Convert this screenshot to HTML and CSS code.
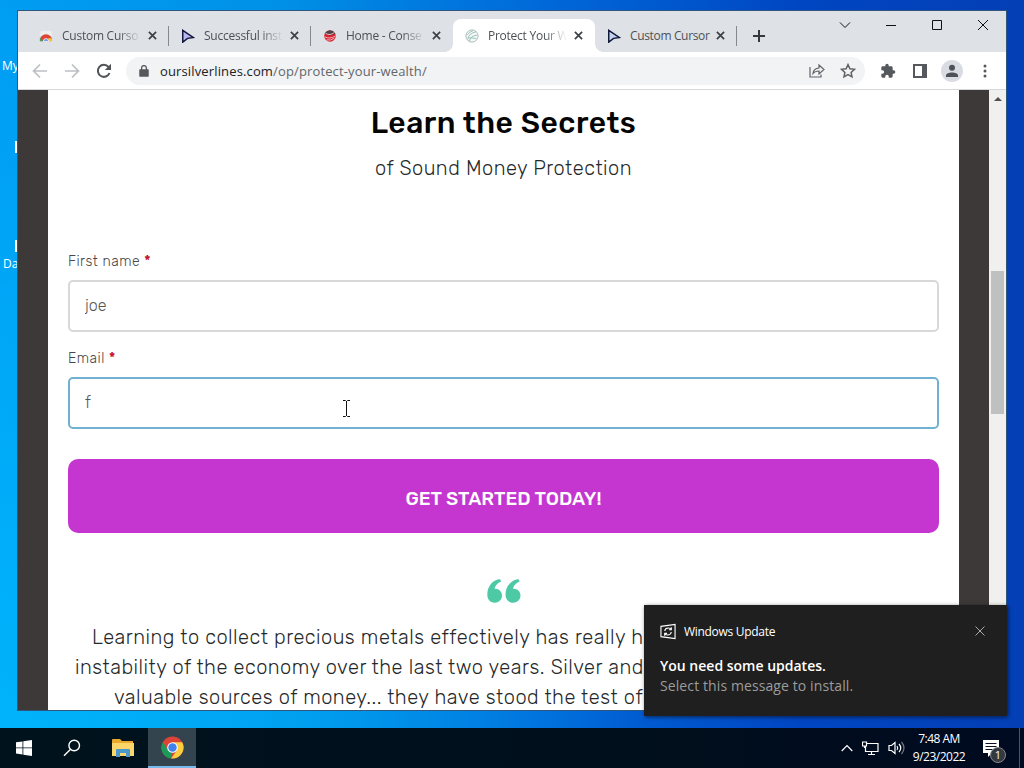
FILE: index.html
```html
<!DOCTYPE html>
<html lang="en">
<head>
    <meta charset="utf-8">
    <title>Protect Your Wealth</title>
    <link rel="stylesheet" href="styles.css">
</head>
<body>
<div class="desktop">
    <div class="shortcut label-my">My</div>
    <div class="shortcut icon-edge edge-one"></div>
    <div class="shortcut icon-edge edge-two"></div>
    <div class="shortcut label-da">Da</div>

    <div class="window">
        <div class="tabstrip">
            <div class="tab">
                <svg class="favicon" viewBox="0 0 16 16"><path d="M2 2h12l1 6H1z" fill="#eee"/><path d="M1 13a7 7 0 0 1 14 0l-4 1H5z" fill="#dc4437"/><path d="M1 10l4 4H1z" fill="#3f9f58"/><path d="M11 10l4 1v3h-5z" fill="#f6c22d"/><path d="M5 14a3 3 0 0 1 6 0z" fill="#4c84e8" stroke="#fff"/></svg>
                <span class="tab-title">Custom Curso</span>
                <svg class="tab-close" viewBox="0 0 10 10"><path d="M1 1l8 8M9 1L1 9"/></svg>
            </div>
            <div class="tab">
                <svg class="favicon" viewBox="0 0 16 16"><path d="M2 1.500l12 8.200-6.500 1L2 15z" fill="#b9b6f2" stroke="#10173a" stroke-width="1.700"/></svg>
                <span class="tab-title">Successful inst</span>
                <svg class="tab-close" viewBox="0 0 10 10"><path d="M1 1l8 8M9 1L1 9"/></svg>
            </div>
            <div class="tab no-line">
                <svg class="favicon" viewBox="0 0 16 16"><circle cx="8" cy="8" r="6.600" fill="#d8202e"/><path d="M2 5.500a6.600 6.600 0 0 1 12 0L9 7z" fill="#4a4547"/><path d="M3 5q5 3 10-1M2 9q6 3 12-1M4 12.500q5 1 9-2" fill="none" stroke="#f5cfd0"/></svg>
                <span class="tab-title">Home - Conse</span>
                <svg class="tab-close" viewBox="0 0 10 10"><path d="M1 1l8 8M9 1L1 9"/></svg>
            </div>
            <div class="tab active">
                <svg class="favicon" viewBox="0 0 16 16"><circle cx="8" cy="8" r="7" fill="#f4f7f6" stroke="#a5b5b3"/><path d="M3 12Q4 5 13 3M5 14q1-6 9-7M2 7q3-4 7-5M4 10q5 0 9 1" fill="none" stroke="#8bbdb1"/></svg>
                <span class="tab-title">Protect Your W</span>
                <svg class="tab-close" viewBox="0 0 10 10"><path d="M1 1l8 8M9 1L1 9"/></svg>
            </div>
            <div class="tab">
                <svg class="favicon" viewBox="0 0 16 16"><path d="M2 1.500l12 8.200-6.500 1L2 15z" fill="#c5d2ee" stroke="#10173a" stroke-width="1.700"/></svg>
                <span class="tab-title full">Custom Cursor</span>
                <svg class="tab-close" viewBox="0 0 10 10"><path d="M1 1l8 8M9 1L1 9"/></svg>
            </div>
            <svg class="new-tab" viewBox="0 0 12 12"><path d="M6 0v12M0 6h12"/></svg>
            <div class="controls">
                <svg viewBox="0 0 12 12"><path d="M1 3.500l5 5 5-5"/></svg>
                <svg viewBox="0 0 12 12"><path d="M1 6.500h10"/></svg>
                <svg viewBox="0 0 12 12"><path d="M1.500 1.500h9v9h-9z"/></svg>
                <svg viewBox="0 0 12 12"><path d="M1 1l10 10M11 1L1 11"/></svg>
            </div>
        </div>

        <div class="toolbar">
            <svg class="nav" viewBox="0 0 16 16"><path d="M15 8H2M8 1.500L1.500 8 8 14.500"/></svg>
            <svg class="nav" viewBox="0 0 16 16"><path d="M1 8h13M8 1.500L14.500 8 8 14.500"/></svg>
            <svg class="nav reload" viewBox="0 0 16 16"><path d="M13.500 10A6 6 0 1 1 12.500 4"/><path d="M15 .8V7H8.800z" class="solid"/></svg>
            <div class="omnibox">
                <svg class="lock" viewBox="0 0 10 12"><path d="M1 5h8v6H1z" fill="#55585c" stroke="#55585c" stroke-width="1.500" stroke-linejoin="round"/><path d="M2.600 5V3a2.400 2.400 0 0 1 4.800 0v2" fill="none" stroke="#55585c" stroke-width="1.300"/></svg>
                <div class="url">oursilverlines.com<span>/op/protect-your-wealth/</span></div>
                <svg class="share" viewBox="0 0 16 14"><path d="M1 3v10h11V10.500M4 9.500q.5-5 6-5.500V1l5 4.500L10 10V7q-4 0-6 2.500z"/></svg>
                <svg class="star" viewBox="0 0 16 16"><path d="M8 1.600l1.900 4.200 4.600.5-3.400 3.100.9 4.500L8 11.600l-4 2.300.9-4.500L1.500 6.300l4.600-.5z"/></svg>
            </div>
            <svg class="tool puzzle" viewBox="0 0 24 24"><path d="M20.500 11H19V7c0-1.100-.9-2-2-2h-4V3.500a2.500 2.500 0 0 0-5 0V5H4c-1.100 0-2 .9-2 2v3.800h1.500a2.700 2.700 0 0 1 0 5.400H2V20c0 1.100.9 2 2 2h3.800v-1.500a2.700 2.700 0 0 1 5.400 0V22H17c1.100 0 2-.9 2-2v-4h1.500a2.500 2.500 0 0 0 0-5z"/></svg>
            <svg class="tool panel" viewBox="0 0 14 14"><path d="M0 0h14v14H0zM2 2v10h7V2z" fill-rule="evenodd"/></svg>
            <div class="avatar"><svg viewBox="0 0 14 14"><circle cx="7" cy="3.800" r="3"/><path d="M1 13v-1.500C1 9.500 4 8.500 7 8.500s6 1 6 3V13z"/></svg></div>
            <svg class="dots" viewBox="0 0 4 14"><circle cx="2" cy="2" r="1.500"/><circle cx="2" cy="7" r="1.500"/><circle cx="2" cy="12" r="1.500"/></svg>
        </div>

        <div class="viewport">
            <main class="page">
                <h1>Learn the Secrets</h1>
                <p class="subtitle">of Sound Money Protection</p>
                <form>
                    <label for="firstName">First name <b>*</b></label>
                    <input type="text" id="firstName" value="joe">
                    <label for="email">Email <b>*</b></label>
                    <input type="text" id="email" class="focused" value="f">
                    <button type="button">GET STARTED TODAY!</button>
                </form>
                <svg class="quote" viewBox="0 0 34 24"><path d="M12 .3C5 1.500.3 8 .3 15.500c0 5 3 8.200 7.300 8.200 4.200 0 7.400-3 7.400-7.200 0-4-3-6.800-6.600-6.800h-.8C8 7 10 4.500 14 2.500q0-2.500-2-2.200z"/><path d="M30.500.3C23.500 1.500 18.500 8 18.500 15.500c0 5 3 8.200 7.500 8.200 4.200 0 7.500-3 7.500-7.200 0-4-3-6.800-6.700-6.800H26c.4-2.700 2.500-5.200 6.500-7.200q0-2.500-2-2.200z"/></svg>
                <div class="testimonial">
                    <p class="line-one">Learning to collect precious metals effectively has really h</p>
                    <p class="line-two">instability of the economy over the last two years. Silver and</p>
                    <p class="line-three">valuable sources of money... they have stood the test of</p>
                </div>
            </main>
            <div class="scrollbar">
                <div class="arrow"></div>
                <div class="thumb"></div>
            </div>
        </div>
    </div>

    <svg class="cursor" viewBox="0 0 7 17"><path d="M0 .5h2.500l1 1 1-1H7M0 16.500h2.500l1-1 1 1H7M3.500 1v15"/></svg>

    <div class="toast">
        <div class="toast-head">
            <svg class="update" viewBox="0 0 17 17"><path d="M1 3l15-2v15L1 14zM5 8q.5-3.200 4-3.200 2 0 3 1.600M12 4v2.600H9.500M12 9q-.5 3.200-4 3.200-2 0-3-1.600M5 13v-2.500h2.500"/></svg>
            <span>Windows Update</span>
            <svg class="toast-close" viewBox="0 0 10 10"><path d="M.5.500l9 9M9.500.500l-9 9"/></svg>
        </div>
        <strong>You need some updates.</strong>
        <p>Select this message to install.</p>
    </div>

    <div class="taskbar">
        <div class="task"><svg width="16" height="16" viewBox="0 0 16 16"><path fill="#fff" d="M0 2.300l6.500-.9v6.100H0zM7.300 1.300L16 0v7.500H7.300zM0 8.300h6.500v6.100L0 13.500zM7.300 8.300H16V16l-8.700-1.300z"/></svg></div>
        <div class="task"><svg width="18" height="18" viewBox="0 0 18 18" fill="none" stroke="#fff" stroke-width="1.400"><circle cx="11.200" cy="6.500" r="5.300"/><path d="M7.300 10.500L1 16.800"/></svg></div>
        <div class="task explorer"><svg width="22" height="19" viewBox="0 0 22 19"><path d="M0 1q0-1 1-1h7l2 2h11v4H0z" fill="#e9a92b"/><path d="M0 4h22v13H0z" fill="#fbd668"/><path d="M4 18v-7q0-1 1-1h12q1 0 1 1v7h-4v-4H8v4z" fill="#4a98cc"/></svg></div>
        <div class="task running"><svg width="23" height="23" viewBox="0 0 24 24"><circle cx="12" cy="12" r="11.500" fill="#dd4436"/><path d="M2 6.250L7.240 14.750 12 17.500l-2 6A11.500 11.500 0 0 1 2 6.250z" fill="#1b9a59"/><path d="M12 6.500h10.100A11.500 11.500 0 0 1 10.500 23.400l6.260-8.650z" fill="#fdcd40"/><circle cx="12" cy="12" r="5.500" fill="#fff"/><circle cx="12" cy="12" r="4.400" fill="#4182ed"/></svg></div>
        <div class="tray">
            <svg width="12" height="8" viewBox="0 0 12 8"><path d="M.7 7L6 1.500 11.300 7"/></svg>
            <svg width="17" height="15" viewBox="0 0 17 15"><path d="M5 2.500h11v8H3.500V5.500M9.500 10.500v3M6 13.500h7M.5 1h4v4h-4zM2.500 5v2"/></svg>
            <svg width="17" height="14" viewBox="0 0 17 14"><path d="M1 4.500h2.500L7 1.500v11L3.500 9.500H1zM9 5q1.500 2 0 4M11 3q3.500 4 0 8"/><path d="M13.500 1q5 6 0 12" opacity=".45"/></svg>
            <div class="clock">7:48 AM<br>9/23/2022</div>
            <div class="action">
                <svg width="16" height="17" viewBox="0 0 16 17"><path d="M0 0h16v13H9l-4 4v-4H0z" fill="#fff" stroke="none"/><path d="M2.500 3.500h11M2.500 6.500h11M2.500 9.500h7" stroke="#071225"/></svg>
                <span class="badge">1</span>
            </div>
        </div>
    </div>
</div>
</body>
</html>
```
FILE: styles.css
```css
* { box-sizing: border-box; }
body { margin: 0; font-family: "Open Sans", "Noto Sans", sans-serif; }
.desktop {
    position: relative; width: 1024px; height: 768px; overflow: hidden;
    background: radial-gradient(ellipse 640px 900px at 0 100%, rgba(0, 190, 255, .75), transparent), linear-gradient(90deg, #0099f2 0%, #008ee6 28%, #0066d8 55%, #0046c2 78%, #043fb6 100%);
}

/* desktop shortcuts peeking out from behind the window */
.shortcut { position: absolute; color: #fff; font-size: 12px; line-height: 16px; }
.label-my { left: 2px; top: 58px; }
.label-da { left: 3px; top: 256px; }
.icon-edge { left: 15px; width: 3px; height: 12px; background: #fff; }
.edge-one { top: 141px; }
.edge-two { top: 240px; }

.window { position: absolute; left: 17px; top: 10px; width: 990px; height: 701px; border: 1px solid #31567e; background: #fff; display: flex; flex-direction: column; }

/* tabs */
.tabstrip { height: 41px; flex: none; background: #dee1e6; display: flex; align-items: flex-end; padding-left: 9px; }
.tab { position: relative; width: 142px; height: 33px; padding: 0 10px 0 12px; display: flex; align-items: center; }
.tab::after { content: ""; position: absolute; right: 0; top: 7px; width: 1px; height: 20px; background: #85888d; }
.no-line::after { display: none; }
.active { background: #fff; border-radius: 8px 8px 0 0; }
.active::before, .active::after { content: ""; position: absolute; top: auto; bottom: 0; width: 8px; height: 8px; }
.active::before { left: -8px; background: radial-gradient(circle at 0 0, transparent 7.5px, #fff 8px); }
.active::after { right: -8px; background: radial-gradient(circle at 100% 0, transparent 7.5px, #fff 8px); }
.favicon { width: 14px; height: 14px; flex: none; }
.tab-title { width: 78px; margin: 0 8px 0 9px; white-space: nowrap; font-size: 12px; letter-spacing: -.25px; color: #4d5155; -webkit-mask-image: linear-gradient(90deg, #000 72%, rgba(0, 0, 0, .1) 98%); }
.tab-title.full { width: 81px; margin-right: 5px; letter-spacing: -.35px; -webkit-mask-image: none; }
.tab-close { width: 9px; height: 9px; flex: none; fill: none; stroke: #3c4043; stroke-width: 1.9; }
.new-tab { width: 12px; height: 12px; margin: 0 0 10px 16px; fill: none; stroke: #35383b; stroke-width: 2; }
.controls { margin-left: auto; height: 41px; padding: 8px 17px 0 0; display: flex; gap: 34px; }
.controls svg { width: 12px; height: 12px; fill: none; stroke: #111; }

/* address bar */
.toolbar { height: 38px; flex: none; border-bottom: 1px solid #d6d8db; display: flex; align-items: center; padding-left: 14px; }
.nav { width: 16px; height: 16px; margin-right: 16px; fill: none; stroke: #bdbfc2; stroke-width: 1.7; }
.reload { stroke: #505357; stroke-width: 2; margin-right: 14px; }
.solid { fill: #505357; stroke: none; }
.omnibox { width: 739px; height: 28px; border-radius: 14px; background: #f1f3f4; display: flex; align-items: center; padding: 0 9px 0 13px; }
.lock { width: 10px; height: 12px; margin-right: 11px; }
.url { flex: 1; font-size: 13px; line-height: 20px; letter-spacing: .14px; color: #202124; }
.url span { color: #63676b; }
.share { width: 16px; height: 14px; margin-right: 15px; fill: none; stroke: #5f6368; stroke-width: 1.2; }
.star { width: 16px; height: 16px; fill: none; stroke: #5f6368; stroke-width: 1.5; }
.tool { fill: #55585c; }
.puzzle { width: 16px; height: 16px; margin-left: 15px; }
.panel { width: 14px; height: 14px; margin-left: 17px; }
.avatar { width: 22px; height: 22px; margin-left: 14px; border-radius: 50%; background: #dadce4; display: flex; justify-content: center; align-items: center; }
.avatar svg { width: 14px; height: 14px; fill: #4d5159; }
.dots { width: 4px; height: 14px; margin-left: 20px; fill: #55585c; }

/* landing page */
.viewport { flex: 1; min-height: 0; display: flex; background: #3e3939; padding-left: 30px; overflow: hidden; }
.page { width: 911px; padding: 0 20px; background: #fff; font-family: Rubik, Roboto, sans-serif; overflow: hidden; }
h1 { margin: 13px 0 0; font-size: 30px; line-height: 40px; font-weight: 500; letter-spacing: .5px; color: #050505; text-align: center; }
.subtitle { margin: 10px 0 0; font-size: 20px; line-height: 30px; font-weight: 300; letter-spacing: .5px; color: #242829; text-align: center; }
form { margin-top: 69px; display: flex; flex-direction: column; }
label { font-size: 14px; line-height: 20px; font-weight: 300; letter-spacing: .5px; color: #484848; margin-bottom: 8px; }
label b { font-weight: 500; color: #c8102e; }
input { height: 52px; padding: 0 15px 2px; border: 2px solid #d8d8d8; border-radius: 5px; font: 300 16px Rubik, Roboto, sans-serif; color: #555; outline: none; margin-bottom: 17px; }
input.focused { border-color: #70b1d1; margin-bottom: 30px; }
button { height: 74px; padding: 4px 0 0; border: 0; border-radius: 10px; background: #c536d0; color: #fff; font: 500 19px Rubik, Roboto, sans-serif; }
.quote { display: block; width: 34px; height: 24px; margin: 46px auto 0; fill: #4ec9a5; }
.testimonial { margin: 19px -20px 0; }
.testimonial p { margin: 0; font-size: 20px; line-height: 30px; font-weight: 300; letter-spacing: .5px; color: #242829; white-space: nowrap; }
.line-one { padding-left: 44px; }
.line-two { padding-left: 27px; }
.line-three { padding-left: 66px; }
.scrollbar { width: 17px; margin-left: 30px; background: #f0f0ef; }
.arrow { width: 8px; height: 4px; margin: 7px 0 0 5px; background: #505050; clip-path: polygon(50% 0, 100% 100%, 0 100%); }
.thumb { width: 13px; height: 143px; margin: 170px 0 0 2px; background: #bfc0c0; }
.cursor { position: absolute; left: 343px; top: 400px; width: 7px; height: 17px; fill: none; stroke: #111; }

/* notification */
.toast { position: absolute; left: 644px; top: 605px; width: 363px; height: 111px; padding: 17px 22px 0 16px; background: #1f1f1f; color: #fff; box-shadow: 1px 1px 4px rgba(0, 0, 0, .6); }
.toast-head { display: flex; align-items: center; height: 18px; font-size: 12px; letter-spacing: -.3px; margin-bottom: 16px; }
.update { width: 16px; height: 17px; margin-right: 8px; fill: none; stroke: #fff; stroke-width: 1.2; }
.toast-close { width: 10px; height: 10px; margin-left: auto; fill: none; stroke: #aaa; }
.toast strong { display: block; font-size: 14px; line-height: 20px; font-weight: 600; }
.toast p { margin: 0; font-size: 14px; line-height: 20px; letter-spacing: .1px; color: #9c9c9c; }

/* taskbar */
.taskbar { position: absolute; left: 0; bottom: 0; width: 1024px; height: 40px; background: linear-gradient(90deg, #00131d, #000f1c 60%, #000a20); display: flex; }
.taskbar::after { content: ""; width: 1px; height: 40px; margin-right: 4px; background: #4b5468; }
.task { width: 48px; height: 40px; display: flex; justify-content: center; align-items: center; }
.explorer { width: 52px; padding-left: 2px; }
.running { background: #33444e; border-bottom: 2px solid #76b9ed; }
.tray { margin-left: auto; width: 178px; display: flex; align-items: center; }
.tray svg { fill: none; stroke: #fff; stroke-width: 1.2; flex: none; margin-right: 9px; }
.tray svg:nth-child(3) { margin-right: 5px; }
.clock { width: 58px; font-size: 12px; line-height: 18px; color: #fff; text-align: center; letter-spacing: -.5px; white-space: nowrap; }
.action { position: relative; margin-left: 15px; height: 17px; }
.badge { position: absolute; left: 7px; top: 7px; width: 16px; height: 16px; border-radius: 50%; border: 1px solid #888; background: #333940; color: #fff; font-size: 11px; line-height: 14px; text-align: center; }
```
